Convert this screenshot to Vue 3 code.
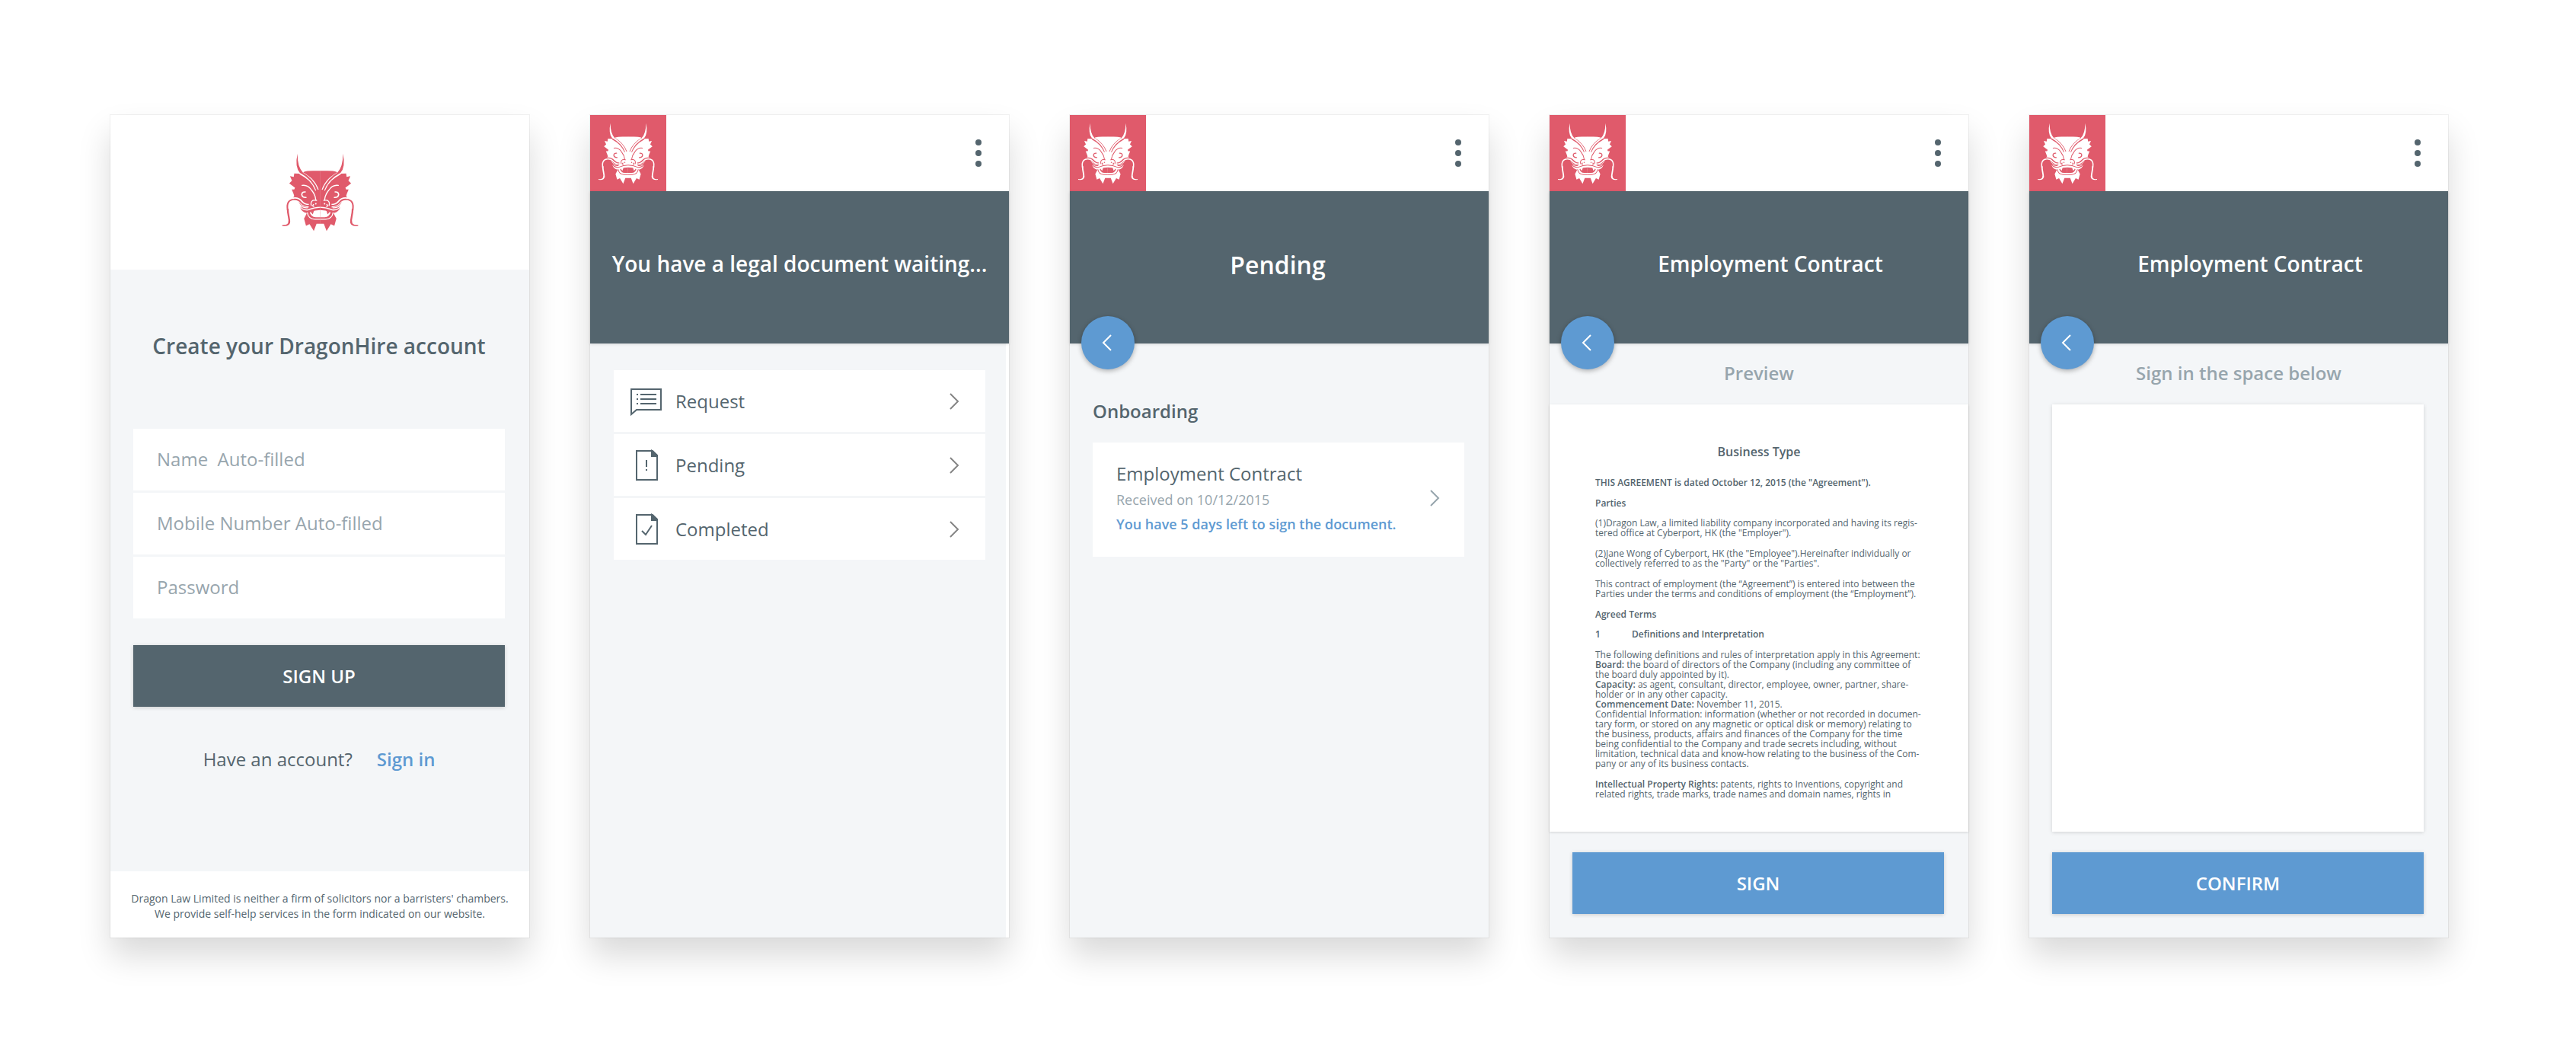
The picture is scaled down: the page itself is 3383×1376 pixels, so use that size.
<script setup>
import { ref } from 'vue'

const name = ref('')
const mobile = ref('')
const password = ref('')

const menu = [
  { label: 'Request', icon: 'request' },
  { label: 'Pending', icon: 'pending' },
  { label: 'Completed', icon: 'completed' },
]

const contract = [
  { lines: [{ strong: 'THIS AGREEMENT is dated October 12, 2015 (the "Agreement").' }] },
  { tight: true, lines: [{ strong: 'Parties' }] },
  {
    lines: [
      { text: '(1)Dragon Law, a limited liability company incorporated and having its regis-' },
      { text: 'tered office at Cyberport, HK (the "Employer").' },
    ],
  },
  {
    lines: [
      { text: '(2)Jane Wong of Cyberport, HK (the "Employee").Hereinafter individually or' },
      { text: 'collectively referred to as the "Party" or the "Parties".' },
    ],
  },
  {
    lines: [
      { text: 'This contract of employment (the “Agreement”) is entered into between the' },
      { text: 'Parties under the terms and conditions of employment (the “Employment”).' },
    ],
  },
  { tight: true, lines: [{ strong: 'Agreed Terms' }] },
  { lines: [{ number: '1', strong: 'Definitions and Interpretation' }] },
  {
    lines: [
      { text: 'The following definitions and rules of interpretation apply in this Agreement:' },
      { strong: 'Board:', text: ' the board of directors of the Company (including any committee of' },
      { text: 'the board duly appointed by it).' },
      { strong: 'Capacity:', text: ' as agent, consultant, director, employee, owner, partner, share-' },
      { text: 'holder or in any other capacity.' },
      { strong: 'Commencement Date:', text: ' November 11, 2015.' },
      { text: 'Confidential Information: information (whether or not recorded in documen-' },
      { text: 'tary form, or stored on any magnetic or optical disk or memory) relating to' },
      { text: 'the business, products, affairs and finances of the Company for the time' },
      { text: 'being confidential to the Company and trade secrets including, without' },
      { text: 'limitation, technical data and know-how relating to the business of the Com-' },
      { text: 'pany or any of its business contacts.' },
    ],
  },
  {
    lines: [
      { strong: 'Intellectual Property Rights:', text: ' patents, rights to Inventions, copyright and' },
      { text: 'related rights, trade marks, trade names and domain names, rights in' },
    ],
  },
]

const flows = [
  { id: 'menu', title: 'You have a legal document waiting...' },
  { id: 'pending', title: 'Pending', back: true },
  { id: 'preview', title: 'Employment Contract', back: true },
  { id: 'sign', title: 'Employment Contract', back: true },
]
</script>

<template>
  <svg class="defs" aria-hidden="true">
    <defs>
      <g id="dragon-half">
        <path class="ink" d="M212 105H182Q158 105 146 109L138 118L129 116L108 115L106 129L91 126L99 144L88 155L111 172L108 179L98 179L105 196L108 206L103 212L122 218Q124 232 130 240Q131 262 148 270Q164 276 175 276H212Z" />
        <path class="ink" d="M155 280L147 295L155 324L169 317L186 345L197 316H212V268H160Z" />
        <path class="cut" stroke-width="14" d="M132 112C162 128 185 146 199 182" />
        <path class="line" stroke-width="7" d="M134 111C164 127 187 147 201 187" />
        <path class="ink" d="M121 36Q109 88 131 114L143 112Q120 88 121 36Z" />
        <path class="cut round" stroke-width="4" d="M139 163Q162 159 178 183Q193 202 194 221" />
        <path class="cut round" stroke-width="5" d="M152 189Q138 188 138 200Q140 212 155 211" />
        <path class="cut round" stroke-width="4" d="M176 243Q172 229 182 223Q190 221 197 223M185 239Q178 245 186 247" />
        <circle class="hole" cx="194" cy="236" r="3" />
        <path class="cut" stroke-width="14" d="M104 218Q124 215 135 229Q146 243 166 244" />
        <path class="line" stroke-width="6" d="M82 262C76 232 88 220 106 219Q124 217 135 231Q146 244 168 244" />
        <path class="line" stroke-width="7" d="M82 256C82 284 91 296 88 312" />
        <path class="ink" d="M92 306Q93 329 60 325V321Q84 323 85 306Z" />
        <path class="cut" stroke-width="4" d="M128 242Q139 263 163 261Q187 250 212 250M124 232Q140 256 162 252" />
        <path class="cut" stroke-width="4" d="M160 271Q164 297 190 298H212" />
        <path class="hole" d="M170 270Q190 261 212 261V290H194Q174 288 170 270Z" />
        <path class="ink" d="M173 268L182 279L187 263Z" />
      </g>
      <symbol id="dragon" viewBox="60 34 303 313">
        <use href="#dragon-half" />
        <use href="#dragon-half" transform="translate(423 0) scale(-1 1)" />
      </symbol>
    </defs>
  </svg>

  <main class="board">
    <section class="screen">
      <header class="brand">
        <svg class="brand-logo" role="img" aria-label="Dragon Law"><use href="#dragon" /></svg>
      </header>
      <form class="signup" @submit.prevent>
        <h1>Create your DragonHire account</h1>
        <div class="fields">
          <input v-model="name" type="text" aria-label="Name" placeholder="Name  Auto-filled" />
          <input v-model="mobile" type="tel" aria-label="Mobile Number" placeholder="Mobile Number Auto-filled" />
          <input v-model="password" type="password" aria-label="Password" placeholder="Password" />
        </div>
        <button class="action dark" type="submit">SIGN UP</button>
        <p class="switch"><span>Have an account?</span><a href="#signin">Sign in</a></p>
      </form>
      <footer class="legal">
        Dragon Law Limited is neither a firm of solicitors nor a barristers' chambers.<br />
        We provide self-help services in the form indicated on our website.
      </footer>
    </section>

    <section v-for="flow in flows" :key="flow.id" class="screen" :class="flow.id">
      <header class="topbar">
        <a class="home" href="#home" aria-label="Home">
          <svg aria-hidden="true"><use href="#dragon" /></svg>
        </a>
        <button class="more" type="button" aria-label="More options">
          <svg width="10" height="38" viewBox="0 0 10 38" fill="currentColor">
            <circle cx="5" cy="5" r="4" /><circle cx="5" cy="19" r="4" /><circle cx="5" cy="33" r="4" />
          </svg>
        </button>
      </header>
      <div class="banner">
        <h2>{{ flow.title }}</h2>
        <button v-if="flow.back" class="back" type="button" aria-label="Back">
          <svg width="14" height="22" viewBox="0 0 14 22"><path d="M12 1L2 11L12 21" /></svg>
        </button>
      </div>

      <nav v-if="flow.id === 'menu'" class="menu-list">
        <a v-for="item in menu" :key="item.label" class="menu-item" :href="'#' + item.icon">
          <svg v-if="item.icon === 'request'" class="icon" width="42" height="42" viewBox="0 0 42 42">
            <path d="M1 5H40V32H8L1 38Z" />
            <path d="M13 12H34M13 18H34M13 24H34" />
            <path d="M8 12H10M8 18H10M8 24H10" />
          </svg>
          <svg v-else class="icon" width="42" height="42" viewBox="0 0 42 42">
            <path d="M8 2H29L35 8V40H8Z" />
            <path class="fold" d="M28 2L35 8V9H28Z" />
            <path v-if="item.icon === 'pending'" d="M21 14V23M21 26V28" />
            <path v-else d="M15 23L20 28L28 16" />
          </svg>
          <span>{{ item.label }}</span>
          <svg class="chevron" width="14" height="22" viewBox="0 0 14 22"><path d="M2 1L12 11L2 21" /></svg>
        </a>
      </nav>

      <div v-else-if="flow.id === 'pending'" class="inbox">
        <h3>Onboarding</h3>
        <a class="card" href="#contract">
          <span class="card-text">
            <span class="card-title">Employment Contract</span>
            <span class="card-date">Received on 10/12/2015</span>
            <span class="card-due">You have 5 days left to sign the document.</span>
          </span>
          <svg class="chevron" width="14" height="22" viewBox="0 0 14 22"><path d="M2 1L12 11L2 21" /></svg>
        </a>
      </div>

      <template v-else-if="flow.id === 'preview'">
        <h3 class="caption">Preview</h3>
        <article class="paper">
          <h4>Business Type</h4>
          <p v-for="(block, i) in contract" :key="i" :class="{ tight: block.tight }">
            <span v-for="(line, j) in block.lines" :key="j" class="line-row"
              ><span v-if="line.number" class="number">{{ line.number }}</span
              ><b v-if="line.strong">{{ line.strong }}</b
              >{{ line.text }}</span
            >
          </p>
        </article>
        <div class="actions"><button class="action" type="button">SIGN</button></div>
      </template>

      <template v-else>
        <h3 class="caption">Sign in the space below</h3>
        <canvas class="pad" aria-label="Signature area"></canvas>
        <div class="actions"><button class="action" type="button">CONFIRM</button></div>
      </template>
    </section>
  </main>
</template>

<style>
body {
  margin: 0;
  background: #fff;
}
</style>

<style scoped>
.defs {
  position: absolute;
  width: 0;
  height: 0;
}
.ink {
  fill: var(--ink);
}
.hole {
  fill: var(--ground);
}
.cut {
  fill: none;
  stroke: var(--ground);
}
.round {
  stroke-linecap: round;
}
.line {
  fill: none;
  stroke: var(--ink);
}

.board {
  display: grid;
  grid-template-columns: repeat(5, minmax(0, 1fr));
  gap: 80px;
  padding: 151px 168px 145px 145px;
  font-family: "Open Sans", "Noto Sans", sans-serif;
  color: #54656e;
}
.screen {
  display: flex;
  flex-direction: column;
  background: #f4f6f8;
  box-shadow: 0 0 0 1px rgba(0, 0, 0, 0.05), 0 24px 40px rgba(0, 0, 0, 0.15);
}
h1,
h2,
h3,
h4,
p {
  margin: 0;
  font-weight: 600;
}
button,
input {
  border: 0;
  border-radius: 0;
  font-family: inherit;
}
a {
  color: inherit;
  text-decoration: none;
}

.brand {
  display: flex;
  justify-content: center;
  padding: 50px 0;
  background: #fff;
}
.brand-logo {
  --ink: #e05a6b;
  --ground: #fff;
  width: 101px;
  height: 103px;
}
.signup {
  flex: 1;
  display: flex;
  flex-direction: column;
  padding: 80px 32px 0 30px;
}
h1 {
  font-size: 28px;
  line-height: 40px;
  text-align: center;
}
.fields {
  display: flex;
  flex-direction: column;
  gap: 3px;
  margin: 89px 0 35px;
}
input {
  box-sizing: border-box;
  width: 100%;
  height: 81px;
  padding: 0 31px 2px;
  background: #fff;
  font-size: 24px;
  color: #54656e;
}
input::placeholder {
  color: #97a5ad;
  opacity: 1;
}
.action {
  width: 100%;
  height: 81px;
  padding: 0;
  background: #5e9ad2;
  color: #fff;
  font-size: 24px;
  font-weight: 600;
  box-shadow: 0 1px 5px rgba(0, 0, 0, 0.18);
}
.action.dark {
  background: #54656e;
}
.switch {
  display: flex;
  justify-content: center;
  gap: 32px;
  margin-top: 52px;
  font-size: 24px;
  line-height: 34px;
  font-weight: 400;
}
.switch a {
  color: #5e9ad2;
  font-weight: 600;
}
.legal {
  padding: 26px 0 21px;
  background: #fff;
  font-size: 14px;
  line-height: 20px;
  text-align: center;
}

.topbar {
  display: flex;
  justify-content: space-between;
  align-items: center;
  background: #fff;
}
.home {
  --ink: #fff;
  --ground: #e05a6b;
  display: flex;
  align-items: center;
  justify-content: center;
  width: 100px;
  height: 100px;
  background: #e05a6b;
}
.home svg {
  width: 78px;
  height: 81px;
}
.more {
  width: 40px;
  margin-right: 20px;
  padding: 10px 0;
  background: none;
  color: #54656e;
}
.more svg {
  display: block;
  margin: 0 auto;
}
.banner {
  position: relative;
  display: flex;
  align-items: center;
  justify-content: center;
  height: 200px;
  background: #54656e;
  color: #fff;
  box-shadow: 0 1px 4px rgba(0, 0, 0, 0.12);
}
h2 {
  padding-bottom: 10px;
  font-size: 28px;
  line-height: 40px;
}
.pending h2 {
  padding: 0 4px 6px 0;
  font-size: 32px;
}
.preview h2,
.sign h2 {
  padding-left: 30px;
}
.back {
  position: absolute;
  left: 15px;
  bottom: -34px;
  display: flex;
  align-items: center;
  justify-content: center;
  width: 70px;
  height: 70px;
  padding: 0 2px 0 0;
  border-radius: 50%;
  background: #5e9ad2;
  box-shadow: 0 2px 6px rgba(0, 0, 0, 0.3);
}
.back path,
.chevron path,
.icon path {
  fill: none;
  stroke: #fff;
  stroke-width: 2;
}
.chevron path {
  stroke: #858585;
}
.icon path {
  stroke: #54656e;
}
.icon .fold {
  fill: #54656e;
}

.menu-list {
  flex: 1;
  display: flex;
  flex-direction: column;
  gap: 3px;
  padding: 35px 27px 0 31px;
  border-right: 4px solid #fff;
}
.menu-item {
  display: flex;
  align-items: center;
  gap: 17px;
  height: 81px;
  padding: 0 34px 0 22px;
  background: #fff;
  font-size: 24px;
}
.menu-item .chevron {
  margin-left: auto;
}

.inbox {
  padding: 69px 32px 0 30px;
}
h3 {
  font-size: 24px;
  line-height: 40px;
}
.card {
  display: flex;
  align-items: center;
  justify-content: space-between;
  margin-top: 21px;
  padding: 23px 32px 27px 31px;
  background: #fff;
}
.card .chevron path {
  stroke: #97a5ad;
}
.card-text {
  display: flex;
  flex-direction: column;
  font-size: 18px;
  line-height: 32px;
}
.card-title {
  font-size: 24px;
  line-height: 36px;
}
.card-date {
  color: #97a5ad;
}
.card-due {
  color: #5e9ad2;
  font-weight: 600;
}

.caption {
  padding: 19px 0 21px;
  color: #97a5ad;
  text-align: center;
}
.paper {
  padding: 51px 60px 29px;
  background: #fff;
  box-shadow: 0 1px 3px rgba(0, 0, 0, 0.14);
  font-size: 12px;
  line-height: 13px;
}
h4 {
  margin-bottom: 23px;
  font-size: 16px;
  line-height: 22px;
  text-align: center;
}
.paper p {
  margin-bottom: 14px;
  font-weight: 400;
}
.paper .tight {
  margin-bottom: 13px;
}
.paper b {
  font-weight: 600;
}
.line-row {
  display: block;
  white-space: nowrap;
}
.number {
  display: inline-block;
  width: 48px;
  font-weight: 600;
}
.pad {
  flex: 1;
  align-self: stretch;
  min-height: 0;
  margin: 0 32px 0 30px;
  background: #fff;
  box-shadow: 0 1px 5px rgba(0, 0, 0, 0.15);
}
.actions {
  padding: 27px 32px 31px 30px;
}
.actions .action {
  display: block;
}
</style>
